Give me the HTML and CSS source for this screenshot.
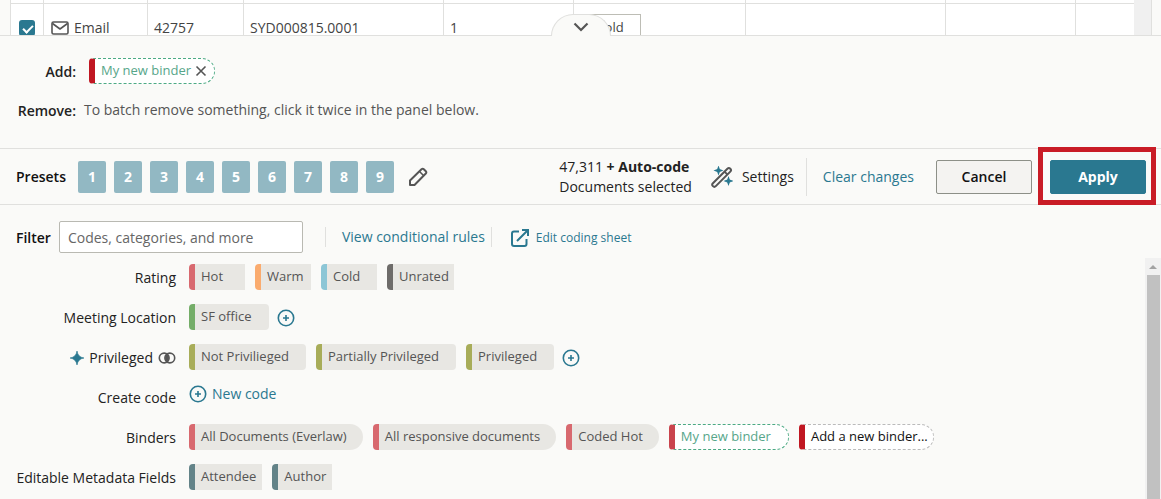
FILE: index.html
```html
<!DOCTYPE html>
<html lang="en">
<head>
  <meta charset="UTF-8">
  <title>Batch coding</title>
  <meta name="viewport" content="width=device-width, initial-scale=1.0">
  <link rel="stylesheet" href="styles.css">
</head>
<body>

  <!-- Results table, cut off by the panel below -->
  <div class="results">
    <table class="results-table">
      <colgroup>
        <col class="col-check"><col class="col-type"><col class="col-id"><col class="col-bates"><col class="col-pages">
        <col class="col-rating"><col class="col-wide"><col class="col-mid"><col>
      </colgroup>
      <tbody>
        <tr class="row-cut"><td></td><td></td><td></td><td></td><td></td><td></td><td></td><td></td><td></td></tr>
        <tr>
          <td><input type="checkbox" class="check" aria-label="Select document" checked></td>
          <td>
            <span class="type">
              <svg width="18" height="14" viewBox="0 0 18 14" fill="none" stroke="#555" stroke-width="1.6" stroke-linejoin="round"><rect x="1" y="1" width="16" height="12" rx="1.5"/><path d="M1.5 2.5 9 8l7.500-5.500"/></svg>
              Email
            </span>
          </td>
          <td>42757</td>
          <td>SYD000815.0001</td>
          <td>1</td>
          <td><button class="rating-btn">Cold</button></td>
          <td></td>
          <td></td>
          <td></td>
        </tr>
      </tbody>
    </table>
    <div class="results-track"></div>
  </div>

  <main class="panel">
    <button class="collapse" aria-label="Collapse panel">
      <svg width="16" height="10" viewBox="0 0 16 10" fill="none" stroke="#555" stroke-width="2.200"><path d="M1.500 1.500 8 8l6.500-6.500"/></svg>
    </button>

    <section class="changes">
      <div class="changes-label">Add:</div>
      <div class="changes-value">
        <span class="chip binder dashed added">My new binder
          <button class="remove" aria-label="Remove My new binder">
            <svg width="12" height="12" viewBox="0 0 12 12" stroke="#555" stroke-width="1.6"><path d="M1.500 1.500l9 9M10.500 1.500l-9 9"/></svg>
          </button>
        </span>
      </div>
      <div class="changes-label">Remove:</div>
      <div class="changes-value hint">To batch remove something, click it twice in the panel below.</div>
    </section>

    <section class="toolbar">
      <span class="presets-label">Presets</span>
      <div class="presets">
        <button>1</button>
        <button>2</button>
        <button>3</button>
        <button>4</button>
        <button>5</button>
        <button>6</button>
        <button>7</button>
        <button>8</button>
        <button>9</button>
      </div>
      <button class="icon-btn edit" aria-label="Edit presets">
        <svg width="20" height="20" viewBox="0 0 20 20" fill="none" stroke="#555" stroke-width="2" stroke-linejoin="round"><path d="M2 18v-4.500L13.500 2.200q1.200-1 2.300 0l2 2q1 1.100 0 2.300L6.500 18z"/><path d="M11.500 4.500l4 4" stroke-width="1.600"/></svg>
      </button>

      <div class="selected">
        <div>47,311 <b>+ Auto-code</b></div>
        <div>Documents selected</div>
      </div>
      <button class="icon-btn settings">
        <svg width="22" height="22" viewBox="0 0 22 22" fill="none"><path d="M1.900 17.200 16.400 2.700a1.900 1.900 0 0 1 2.900 2.900L4.800 20.100a1.900 1.900 0 0 1-2.900-2.900z" stroke="#555" stroke-width="2"/><path d="M13.500 5.600l2.900 2.900" stroke="#555" stroke-width="1.800"/><path d="M7.500 1.200l.9 2.400 2.400.9-2.400.9-.9 2.400-.9-2.400-2.400-.9 2.400-.9zM17.500 11.700l.9 2.400 2.400.9-2.400.9-.9 2.400-.9-2.400-2.400-.9 2.400-.9z" fill="#2a7890" stroke="#2a7890" stroke-width="1.200"/></svg>
        Settings
      </button>
      <div class="clear"><a href="#">Clear changes</a></div>
      <button class="btn">Cancel</button>
      <div class="apply-wrap">
        <button class="btn primary">Apply</button>
        <div class="highlight"></div>
      </div>
    </section>

    <section class="filter">
      <label for="filter">Filter</label>
      <input type="text" id="filter" placeholder="Codes, categories, and more">
      <div class="rules"><a href="#">View conditional rules</a></div>
      <a href="#" class="edit-sheet">
        <svg width="18" height="18" viewBox="0 0 18 18" fill="none" stroke="#2a7890" stroke-width="2"><path d="M8 2.500H3Q1 2.500 1 4.500V15q0 2 2 2h10.500q2 0 2-2v-5"/><path d="M6 12 16.500 1.500M11 1h6v6"/></svg>
        Edit coding sheet
      </a>
    </section>

    <section class="codes">
      <div class="code-list">
        <div class="code-row">
          <div class="code-label">Rating</div>
          <div class="chips">
            <button class="chip rating hot">Hot</button>
            <button class="chip rating warm">Warm</button>
            <button class="chip rating cold">Cold</button>
            <button class="chip rating unrated">Unrated</button>
          </div>
        </div>
        <div class="code-row">
          <div class="code-label">Meeting Location</div>
          <div class="chips">
            <button class="chip code green">SF office</button>
            <button class="icon-btn plus" aria-label="Add meeting location">
              <svg width="18" height="18" viewBox="0 0 18 18" fill="none" stroke="#2a7890" stroke-width="1.600"><circle cx="9" cy="9" r="7.700"/><path d="M9 6v6M6 9h6"/></svg>
            </button>
          </div>
        </div>
        <div class="code-row">
          <div class="code-label">
            <svg width="14" height="14" viewBox="0 0 14 14" fill="#2a7890"><path d="M7 0Q7.900 6.100 14 7 7.900 7.900 7 14 6.100 7.900 0 7 6.100 6.100 7 0z" stroke="#2a7890" stroke-width=".6"/></svg>
            Privileged
            <svg width="18" height="12" viewBox="0 0 18 12"><path d="M9 2a5 5 0 0 1 0 8 5 5 0 0 1 0-8z" fill="#555"/><circle cx="6.200" cy="6" r="4.900" fill="none" stroke="#555" stroke-width="1.600"/><circle cx="11.800" cy="6" r="4.900" fill="none" stroke="#555" stroke-width="1.600"/></svg>
          </div>
          <div class="chips">
            <button class="chip code olive">Not Privilieged</button>
            <button class="chip code olive">Partially Privileged</button>
            <button class="chip code olive">Privileged</button>
            <button class="icon-btn plus" aria-label="Add privileged code">
              <svg width="18" height="18" viewBox="0 0 18 18" fill="none" stroke="#2a7890" stroke-width="1.600"><circle cx="9" cy="9" r="7.700"/><path d="M9 6v6M6 9h6"/></svg>
            </button>
          </div>
        </div>
        <div class="code-row">
          <div class="code-label">Create code</div>
          <button class="icon-btn new-code">
            <svg width="18" height="18" viewBox="0 0 18 18" fill="none" stroke="#2a7890" stroke-width="1.600"><circle cx="9" cy="9" r="7.700"/><path d="M9 6v6M6 9h6"/></svg>
            New code
          </button>
        </div>
        <div class="code-row">
          <div class="code-label">Binders</div>
          <div class="chips">
            <button class="chip binder">All Documents (Everlaw)</button>
            <button class="chip binder">All responsive documents</button>
            <button class="chip binder">Coded Hot</button>
            <button class="chip binder dashed mine">My new binder</button>
            <button class="chip binder dashed new">Add a new binder...</button>
          </div>
        </div>
        <div class="code-row">
          <div class="code-label">Editable Metadata Fields</div>
          <div class="chips">
            <button class="chip field">Attendee</button>
            <button class="chip field">Author</button>
          </div>
        </div>
      </div>
      <div class="scrollbar">
        <div class="scroll-up"></div>
        <div class="scroll-thumb"></div>
      </div>
    </section>
  </main>

</body>
</html>
```
FILE: styles.css
```css
* {
  box-sizing: border-box;
}

body {
  margin: 0;
  height: 100vh;
  overflow: hidden;
  display: flex;
  flex-direction: column;
  background: #fafaf8;
  color: #222;
  font-family: 'Open Sans', sans-serif;
  font-size: 14px;
  line-height: 20px;
}

button, input {
  font: inherit;
  color: inherit;
}

button {
  cursor: pointer;
}

a {
  color: #2a7890;
  text-decoration: none;
}

svg {
  display: block;
  flex: none;
}

/* Results table */
.results {
  display: flex;
  height: 35px;
  overflow: hidden;
  margin: 0 9px 0 10px;
  border-left: 1px solid #e0e0de;
  border-right: 1px solid #e0e0de;
  flex: none;
}

.results-table {
  flex: 1;
  width: 100%;
  table-layout: fixed;
  border-collapse: separate;
  border-spacing: 0;
  background: #fff;
  height: 52px;
}

.results-table td {
  height: 48px;
  padding: 0 6px;
  border-right: 1px solid #e0e0de;
  border-bottom: 1px solid #e0e0de;
  color: #444;
}

.results-table td:last-child {
  border-right: none;
}

.results-table .row-cut td {
  height: 4px;
  padding: 0;
}

.col-check { width: 33px; }
.col-type { width: 104px; }
.col-id { width: 96px; }
.col-bates, .col-wide { width: 200px; }
.col-pages, .col-mid { width: 130px; }
.col-rating { width: 172px; }

.results-track {
  width: 17px;
  background: #f0f0f0;
}

.check {
  appearance: none;
  display: block;
  width: 16px;
  height: 16px;
  margin: 0 0 0 2px;
  border-radius: 3px;
  background: #2a7890;
  position: relative;
}

.check::after {
  content: "";
  position: absolute;
  left: 6px;
  top: 3px;
  width: 4px;
  height: 8px;
  border: solid #fff;
  border-width: 0 2px 2px 0;
  transform: rotate(45deg);
}

.type {
  display: flex;
  align-items: center;
  gap: 5px;
  padding-left: 1px;
}

.rating-btn {
  display: block;
  width: 58px;
  height: 28px;
  margin-left: 3px;
  padding: 0 4px 2px 0;
  border: 1px solid #bdbdb5;
  background: #fff;
  font-size: 13px;
}

/* Coding panel */
.panel {
  position: relative;
  flex: 1;
  min-height: 0;
  display: flex;
  flex-direction: column;
  border-top: 1px solid #e0e0de;
}

.collapse {
  position: absolute;
  left: 50%;
  bottom: 100%;
  transform: translateX(-50%);
  width: 60px;
  height: 22px;
  display: flex;
  align-items: center;
  justify-content: center;
  padding: 3px 0 0;
  border: 1px solid #e0e0de;
  border-bottom: none;
  border-radius: 22px 22px 0 0;
  background: #fafaf8;
}

.changes {
  display: grid;
  grid-template-columns: 60px 1fr;
  grid-template-rows: 26px 26px;
  row-gap: 13px;
  align-items: center;
  padding: 22px 16px 25px;
  border-bottom: 1px solid #e0e0de;
}

.changes-label {
  text-align: right;
  font-weight: 600;
  padding-top: 2px;
}

.changes-value {
  padding-left: 13px;
}

.hint {
  padding-left: 8px;
  color: #555;
}

/* Chips */
.chips {
  display: flex;
  align-items: center;
  gap: 10px;
}

.chip {
  display: flex;
  align-items: center;
  height: 26px;
  padding: 0 17px 2px 6px;
  border: none;
  border-left: 6px solid #d8696f;
  border-radius: 4px;
  background: #e8e7e3;
  color: #555;
  font-size: 13px;
  white-space: nowrap;
}

.rating, .field {
  min-width: 56px;
  padding-right: 5px;
  border-radius: 4px 0 0 4px;
}

.binder {
  padding-right: 16px;
  border-radius: 4px 13px 13px 4px;
}

.field {
  padding-right: 6px;
}

.hot { border-left-color: #d8696f; }
.warm { border-left-color: #faab6e; }
.cold { border-left-color: #8cc6d6; }
.unrated { border-left-color: #6e6c6a; }
.green { border-left-color: #74ad68; }
.olive { border-left-color: #a8ad59; }
.field { border-left-color: #638388; }

.dashed {
  border: 1px dashed #4caa84;
  border-left: 6px solid #c9444d;
  background: #fff;
  color: #57a68a;
  padding: 0 17px 2px 6px;
}

.added {
  width: fit-content;
  gap: 4px;
  padding-right: 7px;
  border-left-color: #c01722;
}

.new {
  padding-right: 5px;
  border-color: #bbb;
  border-left-color: #c01722;
  color: #111;
  font-weight: 500;
}

.remove {
  padding: 2px 0 0;
  border: none;
  background: none;
}

/* Toolbar */
.toolbar {
  display: flex;
  align-items: center;
  height: 56px;
  padding: 0 15px 0 16px;
  border-bottom: 1px solid #e0e0de;
  flex: none;
}

.presets-label,
.filter label {
  color: #111;
  font-weight: 600;
}

.presets {
  display: flex;
  gap: 8px;
  margin-left: 12px;
}

.presets button {
  width: 28px;
  height: 32px;
  padding: 0;
  border: none;
  border-radius: 2px;
  background: #92b8c3;
  color: #fff;
  font-weight: 700;
}

.icon-btn {
  display: flex;
  align-items: center;
  padding: 0;
  border: none;
  background: none;
}

.edit {
  margin-left: 14px;
}

.selected {
  margin-left: auto;
}

.selected b {
  font-weight: 700;
}

.settings {
  gap: 9px;
  margin-left: 19px;
}

.clear {
  margin-left: 12px;
  padding: 9px 22px 9px 16px;
  border-left: 1px solid #e0e0de;
}

.btn {
  width: 96px;
  height: 34px;
  padding: 0;
  border: 1px solid #8d9088;
  border-radius: 2px;
  background: #f4f3f1;
  color: #111;
  font-weight: 600;
}

.primary {
  border-color: #2a7890;
  background: #2a7890;
  color: #fff;
  font-weight: 700;
}

.apply-wrap {
  position: relative;
  margin-left: 18px;
}

.highlight {
  position: absolute;
  top: -13px;
  right: -10px;
  bottom: -11px;
  left: -12px;
  border: 5px solid #c91c26;
  pointer-events: none;
}

/* Filter */
.filter {
  display: flex;
  align-items: center;
  padding: 16px 16px 4px;
}

.filter label {
  padding-top: 2px;
}

.filter input {
  width: 244px;
  height: 32px;
  margin: 0 22px 0 8px;
  padding: 0 8px;
  border: 1px solid #b9b9b2;
  border-radius: 2px;
  background: #fff;
}

.filter input::placeholder {
  color: #666;
}

.rules {
  padding: 0 6px 0 16px;
  border: solid #e0e0de;
  border-width: 0 1px;
}

.edit-sheet {
  display: flex;
  align-items: center;
  gap: 7px;
  margin-left: 19px;
  padding-top: 2px;
  font-size: 12px;
}

/* Codes */
.codes {
  display: flex;
  flex: 1;
  min-height: 0;
}

.code-list {
  flex: 1;
  overflow: hidden;
}

.code-row {
  display: grid;
  grid-template-columns: 160px 1fr;
  column-gap: 13px;
  align-items: center;
  height: 40px;
  padding-left: 16px;
}

.code-label {
  display: flex;
  align-items: center;
  justify-content: flex-end;
  gap: 5px;
  padding-top: 2px;
  white-space: nowrap;
}

.plus {
  margin-left: -2px;
  padding-top: 2px;
}

.new-code {
  gap: 5px;
  padding-bottom: 6px;
  color: #2a7890;
}

.scrollbar {
  width: 16px;
  margin-top: 1px;
  display: flex;
  flex-direction: column;
  align-items: center;
  background: #f1f1f1;
}

.scroll-up {
  border: 4px solid transparent;
  border-top: none;
  border-bottom-color: #a3a3a3;
  margin: 7px 0 6px;
}

.scroll-thumb {
  flex: 1;
  width: 13px;
  background: #c1c1c1;
}
```
